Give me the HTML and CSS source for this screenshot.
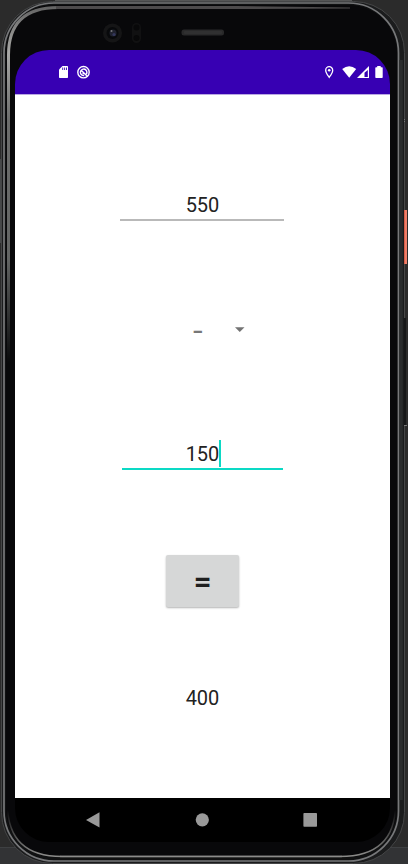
FILE: index.html
```html
<!DOCTYPE html>
<html lang="en">
<head>
<meta charset="utf-8">
<title>Calculator</title>
<link rel="stylesheet" href="styles.css">
</head>
<body>
<div class="device">
  <svg class="shell" viewBox="0 0 408 864" aria-hidden="true">
    <defs>
      <linearGradient id="leftShine" x1="0" y1="0" x2="0" y2="864" gradientUnits="userSpaceOnUse">
        <stop offset="0" stop-color="#5a5a5a"/>
        <stop offset=".06" stop-color="#a8a8a6"/>
        <stop offset=".14" stop-color="#6c6d6c"/>
        <stop offset=".3" stop-color="#626463"/>
        <stop offset=".42" stop-color="#08090a"/>
        <stop offset="1" stop-color="#08090a"/>
      </linearGradient>
      <linearGradient id="bottomShine" x1="0" y1="810" x2="0" y2="856" gradientUnits="userSpaceOnUse">
        <stop offset="0" stop-color="#08080a"/>
        <stop offset="1" stop-color="#8c8c8a"/>
      </linearGradient>
    </defs>
    <rect y="847" width="408" height="17" fill="#323335"/>
    <path d="M0 847.500H408" stroke="#3e4042"/>
    <path d="M55 .5H352" stroke="#555656"/>
    <path d="M.5 159V243" stroke="#47494a"/>
    <rect x="1.500" y="1.500" width="403" height="862" rx="51" fill="#1b1c1d" stroke="#454647"/>
    <rect x="4" y="3" width="394.500" height="858" rx="50" fill="#101112" stroke="#77787a" stroke-width="1.700"/>
    <rect x="399.300" y="60" width="3.500" height="740" fill="#2a2c2d"/>
    <rect x="6" y="5" width="391" height="852" rx="48" fill="#08080a"/>
    <path d="M8.500 420V55Q8.500 7.500 58 7.500" fill="none" stroke="url(#leftShine)" stroke-width="3"/>
    <path d="M56 6H236L350 7.500V8.500L236 9H56Z" fill="#4d4b4c"/>
    <path d="M7.500 805Q8 856.500 62 856.500H340Q395 856.500 395.500 805" fill="none" stroke="url(#bottomShine)" stroke-width="1.500"/>
    <path d="M60 856.500H342" stroke="#8c8c8a" stroke-width="1.500"/>
    <path d="M55 858.500H350" stroke="#111" stroke-width="1.500"/>
    <path d="M404.500 124V318" stroke="#484848"/>
    <path d="M404.500 119V122" stroke="#777" stroke-dasharray="1 1"/>
    <rect x="404" y="318" width="2" height="107" fill="#171819"/>
    <path d="M404 425.500H407" stroke="#777"/>
    <rect x="404" y="210" width="3" height="54" fill="#ef7e69"/>
    <path d="M404.500 210V264" stroke="#d95f49"/>
    <circle cx="112.500" cy="33" r="9.500" fill="#151516"/>
    <circle cx="112.500" cy="33" r="6" fill="#08090b"/>
    <circle cx="113" cy="33" r="3.500" fill="#20222e"/>
    <circle cx="114" cy="34.500" r="1.600" fill="#34385c"/>
    <circle cx="111.500" cy="31" r="1" fill="#77777b"/>
    <rect x="132" y="23" width="9" height="20" rx="4.500" fill="#111112"/>
    <circle cx="136.500" cy="27.500" r="3" fill="#080809"/>
    <circle cx="136.500" cy="38" r="3" fill="#080809"/>
    <rect x="181.500" y="29.500" width="42.500" height="6" rx="2.500" fill="#29292a"/>
    <rect x="184" y="31" width="38" height="3" rx="1" fill="#303031"/>
  </svg>
  <main class="screen">
    <header class="status">
      <svg class="status-left" width="36" height="16" viewBox="58 64 36 16">
        <path d="M62.500 66H67.300Q68 66 68 66.700V77.300Q68 78 67.300 78H59.700Q59 78 59 77.300V69.500Z" fill="#fff"/>
        <path d="M62.700 67.500V70M64.600 67.500V70M66.500 67.500V70" stroke="#3700b3" stroke-width=".9"/>
        <circle cx="83.500" cy="72.200" r="5.700" fill="none" stroke="#fff" stroke-width="1.400"/>
        <path d="M80.800 74A3.300 3.300 0 0 1 86.600 70.800Q87.300 72.500 86.300 74.200M81.200 70.300L87.300 76.200M80.800 74Q82 75.700 84.200 75.500M82.500 73.300L84.500 73.500" fill="none" stroke="#fff" stroke-width="1.400"/>
      </svg>
      <svg class="status-right" width="62" height="16" viewBox="323 64 62 16">
        <path d="M329.200 77.300C327.500 75 325.700 72.700 325.700 70.200A3.500 3.500 0 0 1 332.700 70.200C332.700 72.700 330.900 75 329.200 77.300Z" fill="none" stroke="#fff" stroke-width="1.300"/>
        <circle cx="329.200" cy="70.300" r="1.300" fill="#fff"/>
        <path d="M342.200 69Q349.200 63.500 356.200 69L349.200 77.700Z" fill="#fff"/>
        <path d="M369 66V78H357Z" fill="#fff"/>
        <path d="M367.800 70V77H364.500V72.800Z" fill="#3700b3"/>
        <path d="M377.200 66H380.700V67.200H382Q382.700 67.200 382.700 68V77.200Q382.700 78 382 78H376Q375.300 78 375.300 77.200V68Q375.300 67.200 376 67.200H377.200Z" fill="#fff"/>
      </svg>
    </header>
    <section class="content">
      <div class="field first">550</div>
      <div class="operator">
        <span class="minus">-</span>
        <svg class="arrow" width="10" height="6" viewBox="0 0 10 6"><path d="M0 .3H9.500L4.750 5Z" fill="#737373"/></svg>
      </div>
      <div class="field second"><span class="value">150</span></div>
      <button class="equals" type="button"><span class="sign">=</span></button>
      <output class="result">400</output>
    </section>
    <nav class="nav">
      <svg width="233" height="16" viewBox="86 812 233 16" fill="#999">
        <path d="M86 820L99.500 812.200V827.500Z"/>
        <circle cx="202.300" cy="819.800" r="6.600"/>
        <rect x="303.400" y="813" width="13.600" height="13.800" rx=".8"/>
      </svg>
    </nav>
  </main>
</div>
</body>
</html>
```
FILE: styles.css
```css
* { box-sizing: border-box; }
body {
  margin: 0;
  background: #2b2b2b;
  font-family: Roboto, sans-serif;
}
.device {
  position: relative;
  width: 408px;
  height: 864px;
  padding: 50px 18px 22px 15px;
  overflow: hidden;
}
.shell {
  position: absolute;
  inset: 0;
  width: 408px;
  height: 864px;
}
.screen {
  position: relative;
  display: flex;
  flex-direction: column;
  height: 792px;
}
.status {
  display: flex;
  justify-content: space-between;
  height: 44px;
  padding: 14px 5px 0 43px;
  border-radius: 34px 34px 0 0;
  background: #3700b3;
}
.content {
  display: flex;
  flex: 1;
  flex-direction: column;
  align-items: center;
  border-top: 1px solid #b9a8e2;
  background: #fff;
  color: #222;
  font-size: 20px;
  line-height: 24px;
}
.field {
  flex: none;
  text-align: center;
}
.first {
  width: 164px;
  height: 28px;
  margin: 98px 0 0 -1px;
  padding-left: 1px;
  border-bottom: 2px solid #b9b9b9;
}
.operator {
  display: flex;
  align-items: center;
  justify-content: space-between;
  width: 52px;
  height: 20px;
  margin: 98px 0 0 33px;
  color: #777;
}
.minus {
  font-size: 20px;
  font-weight: 700;
  line-height: 20px;
  transform: translate(-1px, 2px) scaleX(1.500);
  transform-origin: left;
}
.arrow { margin-top: 2px; }
.second {
  width: 161px;
  height: 30px;
  margin-top: 101px;
  border-bottom: 2px solid #0cd9c5;
}
.value {
  display: inline-block;
  height: 27px;
  margin-right: -2px;
  border-right: 2px solid #0cd9c5;
  line-height: 28px;
}
.equals {
  flex: none;
  width: 73px;
  height: 52px;
  margin-top: 85px;
  padding: 0;
  border: 0;
  border-radius: 2px;
  background: #d6d7d7;
  box-shadow: 0 1px 2px rgba(0, 0, 0, .3);
  color: #1f1f1f;
  font: 700 27px/52px Roboto, sans-serif;
}
.sign {
  display: inline-block;
  transform: translateY(1px) scale(1.150, 1.100);
}
.result { margin-top: 79px; }
.nav {
  display: flex;
  flex: none;
  height: 44px;
  padding: 14px 0 0 71px;
  border-radius: 0 0 34px 34px;
  background: #000;
}
```
